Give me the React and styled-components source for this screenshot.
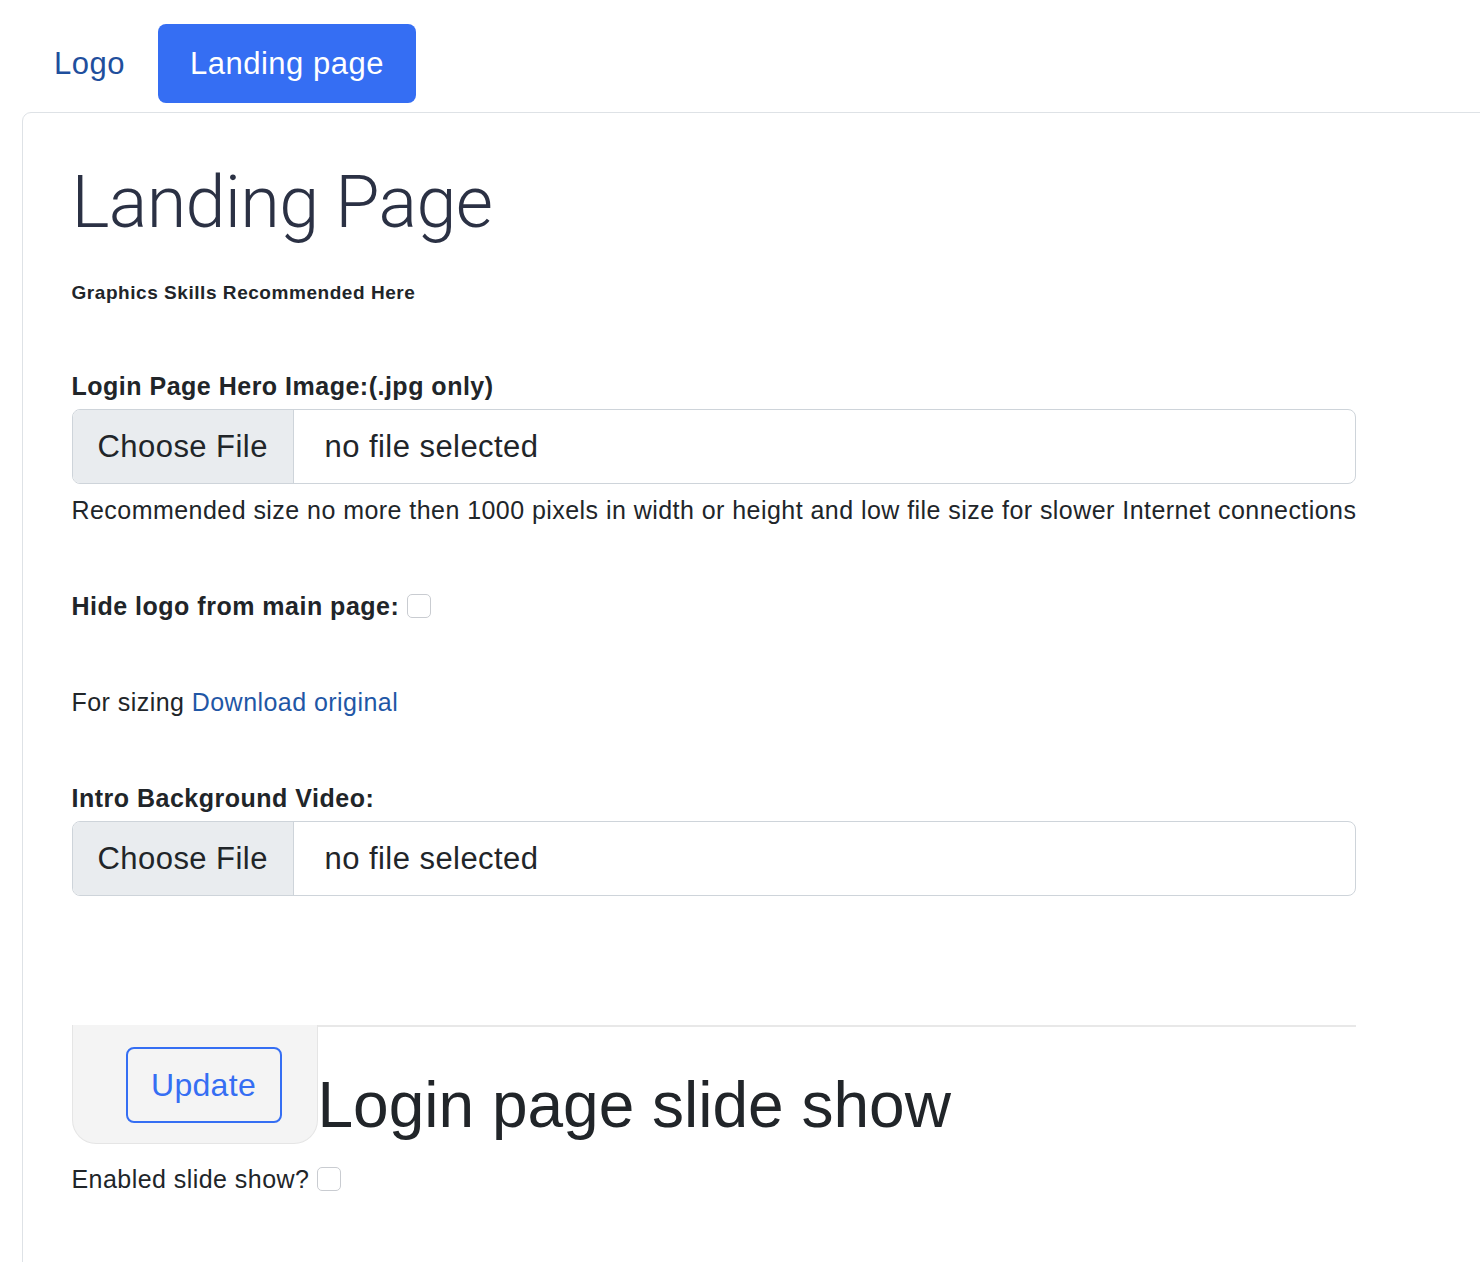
import React from "react";
import styled, { createGlobalStyle } from "styled-components";

const Global = createGlobalStyle`
  html, body { margin: 0; padding: 0; background: #fff; }
  body { font-family: "Liberation Sans", Arial, sans-serif; color: #212529; }
  * { box-sizing: border-box; }
`;

const Page = styled.div`
  padding: 24px 0 0 22px;
  overflow: hidden;
  min-height: 1262px;
`;

const Tabs = styled.nav`
  display: flex;
  align-items: center;
`;

const Tab = styled.a`
  display: block;
  padding: 17px 32px;
  font-size: 31px;
  line-height: 45px;
  letter-spacing: 0.5px;
  border-radius: 8px;
  text-decoration: none;
  color: ${(p) => (p.$active ? "#fff" : "#1f4f9d")};
  background: ${(p) => (p.$active ? "#356ef3" : "transparent")};
  margin-left: ${(p) => (p.$active ? "1px" : "0")};
`;

const Card = styled.section`
  margin-top: 9px;
  margin-right: -40px;
  border: 1.5px solid #dee2e6;
  border-radius: 9px 0 0 0;
  padding: 45px 48px 60px 48.5px;
  min-height: 1160px;
`;

const Content = styled.div`
  width: 1284px;
`;

const Title = styled.h1`
  margin: 0;
  font-family: Roboto, "Liberation Sans", sans-serif;
  font-weight: 300;
  font-size: 72px;
  line-height: 89px;
  color: #2b3144;
  letter-spacing: -0.7px;
`;

const Subtitle = styled.div`
  margin-top: 32px;
  font-size: 19px;
  line-height: 27px;
  font-weight: 700;
  letter-spacing: 0.55px;
  color: #212529;
`;

const Label = styled.div`
  margin-top: ${(p) => p.$mt || 60}px;
  font-size: 25px;
  line-height: 36px;
  font-weight: 700;
  letter-spacing: 0.5px;
  display: flex;
  align-items: center;
  gap: 8px;
`;

const FileBox = styled.div`
  margin-top: 5px;
  height: 75px;
  display: flex;
  border: 1.5px solid #ced4da;
  border-radius: 8px;
  overflow: hidden;
  font-size: 31px;
  letter-spacing: 0.45px;
`;

const FileButton = styled.div`
  width: 221px;
  background: #e9ecef;
  border-right: 1.5px solid #ced4da;
  display: flex;
  align-items: center;
  padding-left: 25px;
  color: #212529;
`;

const FileName = styled.div`
  display: flex;
  align-items: center;
  padding-left: 31px;
  color: #212529;
`;

const Help = styled.div`
  margin-top: 8px;
  font-size: 25px;
  line-height: 36px;
  color: #212529;
  letter-spacing: 0.45px;
  white-space: nowrap;
`;

const Text = styled.div`
  margin-top: ${(p) => p.$mt || 60}px;
  font-size: 25px;
  line-height: 36px;
  letter-spacing: 0.45px;
  display: flex;
  align-items: center;
  gap: 8px;
`;

const Link = styled.a`
  color: #1f57a6;
  text-decoration: none;
`;

const Check = styled.span`
  display: inline-block;
  flex: none;
  width: 24px;
  height: 24px;
  border: 1.5px solid #c9ccd1;
  border-radius: 5px;
  background: #fff;
`;

const Divider = styled.div`
  margin-top: 129px;
  border-top: 2px solid #e8e8e8;
`;

const SlideRow = styled.div`
  display: flex;
  align-items: flex-end;
  margin-top: -2px;
`;

const UpdateBox = styled.div`
  width: 246px;
  height: 119px;
  background: #f4f4f4;
  border: 1.5px solid #e5e5e5;
  border-top: none;
  border-radius: 0 0 24px 24px;
  padding: 22px 0 0 53px;
`;

const UpdateButton = styled.button`
  width: 156px;
  height: 76px;
  border: 2px solid #356ef3;
  border-radius: 8px;
  background: transparent;
  color: #356ef3;
  font-family: "Liberation Sans", Arial, sans-serif;
  font-size: 32px;
  letter-spacing: 0.3px;
  padding: 0;
`;

const SlideTitle = styled.h2`
  margin: 0;
  font-weight: 400;
  font-size: 64px;
  line-height: 77px;
  color: #212529;
`;

export default function App() {
  return (
    <>
      <Global />
      <Page>
        <Tabs>
          <Tab href="#">Logo</Tab>
          <Tab href="#" $active>Landing page</Tab>
        </Tabs>
        <Card>
          <Content>
            <Title>Landing Page</Title>
            <Subtitle>Graphics Skills Recommended Here</Subtitle>
            <Label $mt={62}>Login Page Hero Image:(.jpg only)</Label>
            <FileBox>
              <FileButton>Choose File</FileButton>
              <FileName>no file selected</FileName>
            </FileBox>
            <Help>
              Recommended size no more then 1000 pixels in width or height and low file size for slower Internet connections
            </Help>
            <Label>
              Hide logo from main page: <Check />
            </Label>
            <Text>
              <span>
                For sizing <Link href="#">Download original</Link>
              </span>
            </Text>
            <Label>Intro Background Video:</Label>
            <FileBox>
              <FileButton>Choose File</FileButton>
              <FileName>no file selected</FileName>
            </FileBox>
            <Divider />
            <SlideRow>
              <UpdateBox>
                <UpdateButton>Update</UpdateButton>
              </UpdateBox>
              <SlideTitle>Login page slide show</SlideTitle>
            </SlideRow>
            <Text $mt={17}>
              Enabled slide show? <Check />
            </Text>
          </Content>
        </Card>
      </Page>
    </>
  );
}
